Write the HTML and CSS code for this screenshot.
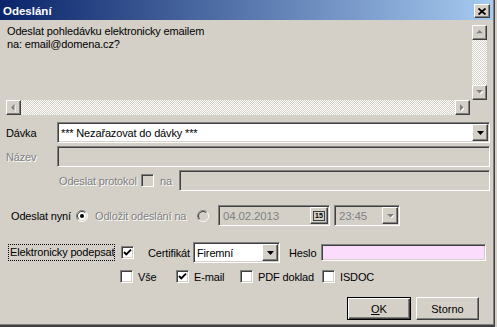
FILE: index.html
```html
<!DOCTYPE html>
<html>
<head>
<meta charset="utf-8">
<link rel="stylesheet" href="styles.css">
</head>
<body>
<div class="dlg">
  <div class="title">
    <span class="title-text">Odeslání</span>
    <div class="close raised"><svg width="8" height="7" viewBox="0 0 8 7"><path d="M0.5 0.5 L7.5 6.5 M7.5 0.5 L0.5 6.5" stroke="#000" stroke-width="1.7" fill="none"/></svg></div>
  </div>

  <div class="msg">
    <div class="msgtext">Odeslat pohledávku elektronicky emailem<br>na: email@domena.cz?</div>
    <div class="vscroll">
      <div class="sb raised"><svg width="7" height="5" viewBox="0 0 7 5"><polygon points="4,1 7,4 1,4" fill="#fff"/><polygon points="3.5,0 7,3.5 0,3.5" fill="#808080"/></svg></div>
      <div class="track"></div>
      <div class="sb raised"><svg width="7" height="5" viewBox="0 0 7 5"><polygon points="1,1 8,1 4.5,4.5" fill="#fff"/><polygon points="0,0 7,0 3.5,3.5" fill="#808080"/></svg></div>
    </div>
    <div class="hscroll">
      <div class="sb raised"><svg width="5" height="8" viewBox="0 0 5 8"><polygon points="4.5,1 4.5,8 1,4.5" fill="#fff"/><polygon points="3.5,0 3.5,7 0,3.5" fill="#808080"/></svg></div>
      <div class="track"></div>
      <div class="sb raised"><svg width="5" height="8" viewBox="0 0 5 8"><polygon points="1,1 4.5,4.5 1,8" fill="#fff"/><polygon points="0,0 3.5,3.5 0,7" fill="#808080"/></svg></div>
    </div>
  </div>

  <div class="row r-davka">
    <span class="lbl">Dávka</span>
    <div class="field sunken combo white">
      <span class="ctext">*** Nezařazovat do dávky ***</span>
      <div class="ddb raised"><svg width="7" height="4" viewBox="0 0 7 4"><polygon points="0,0 7,0 3.5,4" fill="#000"/></svg></div>
    </div>
  </div>

  <div class="row r-nazev">
    <span class="lbl dis">Název</span>
    <div class="field sunken"></div>
  </div>

  <div class="row r-proto">
    <span class="protolbl dis">Odeslat protokol</span>
    <span class="cb sunken gray"></span>
    <span class="na dis">na</span>
    <div class="field sunken"></div>
  </div>

  <div class="row r-send">
    <span class="l-now">Odeslat nyní</span>
    <svg class="radio" width="12" height="12" viewBox="0 0 12 12">
      <circle cx="6" cy="6" r="5" fill="#fff"/>
      <path d="M2.1 9.9 A5.5 5.5 0 0 1 9.9 2.1" stroke="#808080" fill="none"/>
      <path d="M9.9 2.1 A5.5 5.5 0 0 1 2.1 9.9" stroke="#fff" fill="none"/>
      <path d="M2.8 9.2 A4.5 4.5 0 0 1 9.2 2.8" stroke="#404040" fill="none"/>
      <path d="M9.2 2.8 A4.5 4.5 0 0 1 2.8 9.2" stroke="#d4d0c8" fill="none"/>
      <circle cx="6" cy="6" r="2" fill="#000"/>
    </svg>
    <span class="l-later dis">Odložit odeslání na</span>
    <svg class="radio" width="12" height="12" viewBox="0 0 12 12">
      <circle cx="6" cy="6" r="5" fill="#d4d0c8"/>
      <path d="M2.1 9.9 A5.5 5.5 0 0 1 9.9 2.1" stroke="#808080" fill="none"/>
      <path d="M9.9 2.1 A5.5 5.5 0 0 1 2.1 9.9" stroke="#fff" fill="none"/>
      <path d="M2.8 9.2 A4.5 4.5 0 0 1 9.2 2.8" stroke="#404040" fill="none"/>
      <path d="M9.2 2.8 A4.5 4.5 0 0 1 2.8 9.2" stroke="#d4d0c8" fill="none"/>
    </svg>
    <div class="date sunken">
      <span class="gtext">04.02.2013</span>
      <div class="calb raised"><span class="cal">15</span></div>
    </div>
    <div class="time sunken">
      <span class="gtext">23:45</span>
      <div class="ddb raised"><svg width="7" height="4" viewBox="0 0 7 4"><polygon points="1,1 8,1 4.5,4.5" fill="#fff"/><polygon points="0,0 7,0 3.5,3.5" fill="#808080"/></svg></div>
    </div>
  </div>

  <div class="row r-sign">
    <span class="focus">Elektronicky podepsat</span>
    <span class="cb sunken"><svg width="11" height="11" viewBox="0 0 11 11"><path d="M2 5 L4.3 7.4 L9 2.6" stroke="#000" stroke-width="1.9" fill="none"/></svg></span>
    <span class="l-cert">Certifikát</span>
    <div class="cert sunken white">
      <span class="ctext">Firemní</span>
      <div class="ddb raised"><svg width="7" height="4" viewBox="0 0 7 4"><polygon points="0,0 7,0 3.5,4" fill="#000"/></svg></div>
    </div>
    <span class="l-heslo">Heslo</span>
    <div class="heslo sunken"></div>
  </div>

  <div class="row r-checks">
    <span class="chk w1"><span class="cb sunken"></span><span class="ct">Vše</span></span>
    <span class="chk w2"><span class="cb sunken"><svg width="11" height="11" viewBox="0 0 11 11"><path d="M2 5 L4.3 7.4 L9 2.6" stroke="#000" stroke-width="1.9" fill="none"/></svg></span><span class="ct">E-mail</span></span>
    <span class="chk w3"><span class="cb sunken"></span><span class="ct">PDF doklad</span></span>
    <span class="chk"><span class="cb sunken"></span><span class="ct">ISDOC</span></span>
  </div>

  <div class="buttons">
    <button class="btn def"><u>O</u>K</button>
    <button class="btn std">Storno</button>
  </div>
</div>
</body>
</html>
```

FILE: styles.css
```css
* { box-sizing: border-box; margin: 0; padding: 0; }
html, body { width: 497px; height: 327px; overflow: hidden; }
body {
  background: #d4d0c8;
  font: 11px "Liberation Sans", Arial, sans-serif;
  letter-spacing: -0.15px;
  color: #000;
  white-space: nowrap;
}
.dlg {
  width: 495px;
  height: 327px;
  background: #d4d0c8;
  border-right: 1px solid #404040;
  border-bottom: 2px solid #404040;
  padding-right: 1px;
  padding-bottom: 1px;
  box-shadow: inset -1px -1px #808080;
  display: flex;
  flex-direction: column;
}
.title {
  height: 20px;
  padding: 2px 3px 0 3px;
  background: linear-gradient(to right, #0a246a, #a6caf0);
  color: #fff;
  display: flex;
  align-items: center;
  justify-content: space-between;
}
.title-text { font-weight: bold; font-size: 11.5px; letter-spacing: 0; }
.raised {
  background: #d4d0c8;
  border: 1px solid;
  border-color: #fff #404040 #404040 #fff;
  box-shadow: inset -1px -1px #808080;
  display: flex;
  align-items: center;
  justify-content: center;
}
.sunken {
  border: 1px solid;
  border-color: #808080 #fff #fff #808080;
  box-shadow: inset 1px 1px #404040, inset -1px -1px #d4d0c8;
  padding: 1px;
}
.close { width: 16px; height: 14px; }
.msg {
  display: grid;
  grid-template-columns: 464px 2px 15px;
  grid-template-rows: 75px 15px;
  margin: 5px 0 0 6px;
}
.msgtext { grid-column: 1 / 3; grid-row: 1; padding-left: 1px; line-height: 13px; }
.vscroll { grid-column: 3; grid-row: 1; display: flex; flex-direction: column; }
.hscroll { grid-column: 1; grid-row: 2; display: flex; }
.sb { width: 15px; height: 15px; flex: none; }
.track {
  flex: 1;
  background: repeating-conic-gradient(#fff 0 25%, #d4d0c8 0 50%) 0 0 / 2px 2px;
}
.row {
  display: flex;
  align-items: center;
  height: 21px;
  padding-right: 3px;
}
.lbl { width: 51px; flex: none; }
.dis { color: #808080; text-shadow: 1px 1px 0 #fff; }
.field { flex: 1; height: 21px; display: flex; align-items: center; }
.white { background: #fff; }
.ctext { padding-left: 2px; flex: 1; overflow: hidden; }
.ddb { width: 16px; height: 17px; flex: none; }
.r-davka { margin-top: 7px; padding-left: 6px; }
.r-nazev { margin-top: 3px; padding-left: 6px; }
.r-proto { margin-top: 3px; padding-left: 59px; }
.protolbl { width: 82px; flex: none; }
.cb { width: 13px; height: 13px; background: #fff; flex: none; padding: 0; display: flex; }
.cb.gray { background: #d4d0c8; }
.na { width: 25px; padding-left: 6px; flex: none; }
.r-send { margin-top: 14px; padding-left: 11px; }
.l-now { width: 65px; flex: none; }
.radio { flex: none; }
.l-later { width: 109px; padding-left: 7px; flex: none; }
.date {
  margin-left: 9px;
  width: 112px;
  height: 21px;
  display: flex;
  align-items: center;
  flex: none;
}
.gtext { color: #808080; padding-left: 3px; flex: 1; font-size: 11.5px; }
.calb { width: 18px; height: 17px; }
.cal {
  font-size: 7px;
  line-height: 8px;
  letter-spacing: 0;
  border: 1px solid #404040;
  padding: 0 1px;
  color: #000;
  background: #d4d0c8;
  font-weight: bold;
}
.time {
  margin-left: 4px;
  width: 66px;
  height: 21px;
  display: flex;
  align-items: center;
  flex: none;
}
.r-sign { margin-top: 16px; padding-left: 8px; }
.focus {
  width: 107px;
  height: 17px;
  border: 1px dotted #000;
  padding-left: 1px;
  line-height: 15px;
  flex: none;
  overflow: hidden;
}
.r-sign .cb { margin-left: 6px; }
.l-cert { margin-left: 14px; width: 45px; flex: none; }
.cert {
  width: 87px;
  height: 21px;
  display: flex;
  align-items: center;
  flex: none;
}
.l-heslo { margin-left: 9px; width: 32px; flex: none; }
.heslo { width: 165px; height: 17px; background: #fcdcfc; flex: none; }
.r-checks { margin-top: 7px; height: 13px; padding-left: 120px; }
.chk { display: flex; align-items: center; flex: none; }
.ct { margin-left: 5px; }
.w1 { width: 56px; }
.w2 { width: 64px; }
.w3 { width: 82px; }
.buttons {
  margin-top: 14px;
  display: flex;
  justify-content: flex-end;
  gap: 5px;
  padding-right: 14px;
}
.btn {
  font: 11px "Liberation Sans", Arial, sans-serif;
  color: #000;
  height: 23px;
  background: #d4d0c8;
}
.btn.def {
  width: 64px;
  border: 1px solid #000;
  box-shadow: inset 1px 1px #fff, inset -1px -1px #404040, inset -2px -2px #808080;
}
.btn.std {
  width: 63px;
  border: 1px solid;
  border-color: #fff #404040 #404040 #fff;
  box-shadow: inset -1px -1px #808080;
}
```
